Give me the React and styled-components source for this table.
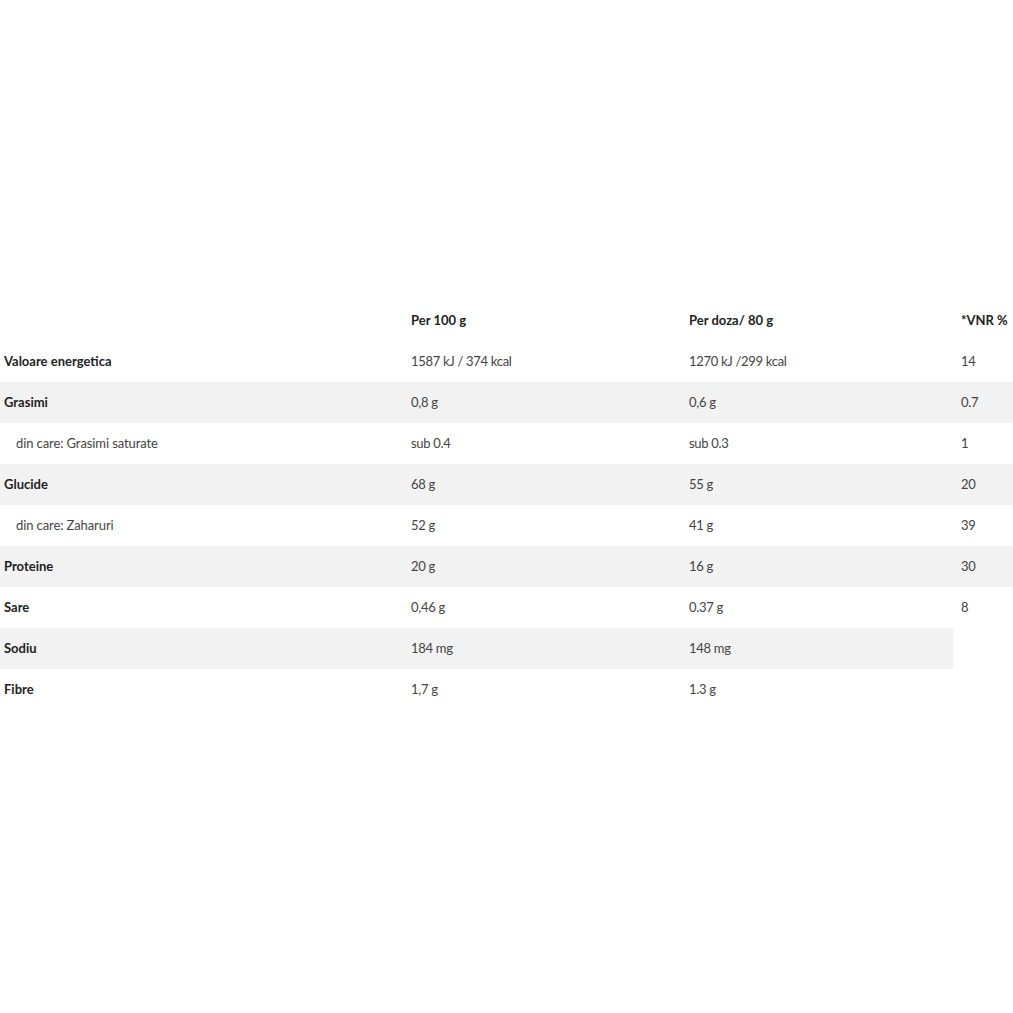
import React from 'react';
import styled, { createGlobalStyle } from 'styled-components';

const GlobalStyle = createGlobalStyle`
  body {
    margin: 0;
    background: #fff;
    font-family: Lato, "Liberation Sans", sans-serif;
  }
`;

const Wrapper = styled.div`
  padding-top: 300px;
  width: 1013px;
`;

const Table = styled.table`
  width: 1013px;
  border-collapse: collapse;
  border-spacing: 0;
  table-layout: fixed;
  font-size: 13px;
  color: #444;
`;

const Row = styled.tr`
  height: 41px;
  td {
    background: ${({ shaded }) => (shaded ? '#f2f2f2' : 'transparent')};
  }
`;

const HeadCell = styled.th`
  text-align: left;
  font-weight: 700;
  color: #222;
  padding: 0 0 2px ${({ last }) => (last ? '8px' : '4px')};
  height: 39px;
`;

const LabelCell = styled.td`
  padding: 0 0 2px ${({ sub }) => (sub ? '16px' : '4px')};
  font-weight: ${({ sub }) => (sub ? 400 : 700)};
  color: ${({ sub }) => (sub ? '#444' : '#222')};
  letter-spacing: ${({ sub }) => (sub ? '-0.1px' : '0')};
`;

const Cell = styled.td`
  padding: 0 0 2px ${({ last }) => (last ? '8px' : '4px')};
  letter-spacing: -0.3px;
`;

const rows = [
  { label: 'Valoare energetica', a: '1587 kJ / 374 kcal', b: '1270 kJ /299 kcal', vnr: '14' },
  { label: 'Grasimi', a: '0,8 g', b: '0,6 g', vnr: '0.7' },
  { label: 'din care: Grasimi saturate', sub: true, a: 'sub 0.4', b: 'sub 0.3', vnr: '1' },
  { label: 'Glucide', a: '68 g', b: '55 g', vnr: '20' },
  { label: 'din care: Zaharuri', sub: true, a: '52 g', b: '41 g', vnr: '39' },
  { label: 'Proteine', a: '20 g', b: '16 g', vnr: '30' },
  { label: 'Sare', a: '0,46 g', b: '0.37 g', vnr: '8' },
  { label: 'Sodiu', a: '184 mg', b: '148 mg' },
  { label: 'Fibre', a: '1,7 g', b: '1.3 g' },
];

export default function App() {
  return (
    <Wrapper>
      <GlobalStyle />
      <Table>
        <colgroup>
          <col style={{ width: 407 }} />
          <col style={{ width: 278 }} />
          <col style={{ width: 268 }} />
          <col />
        </colgroup>
        <thead>
          <tr>
            <HeadCell />
            <HeadCell>Per 100 g</HeadCell>
            <HeadCell>Per doza/ 80 g</HeadCell>
            <HeadCell last>*VNR %</HeadCell>
          </tr>
        </thead>
        <tbody>
          {rows.map((r, i) => (
            <Row key={r.label} shaded={i % 2 === 1}>
              <LabelCell sub={r.sub}>{r.label}</LabelCell>
              <Cell>{r.a}</Cell>
              <Cell>{r.b}</Cell>
              {r.vnr !== undefined && <Cell last>{r.vnr}</Cell>}
            </Row>
          ))}
        </tbody>
      </Table>
    </Wrapper>
  );
}
